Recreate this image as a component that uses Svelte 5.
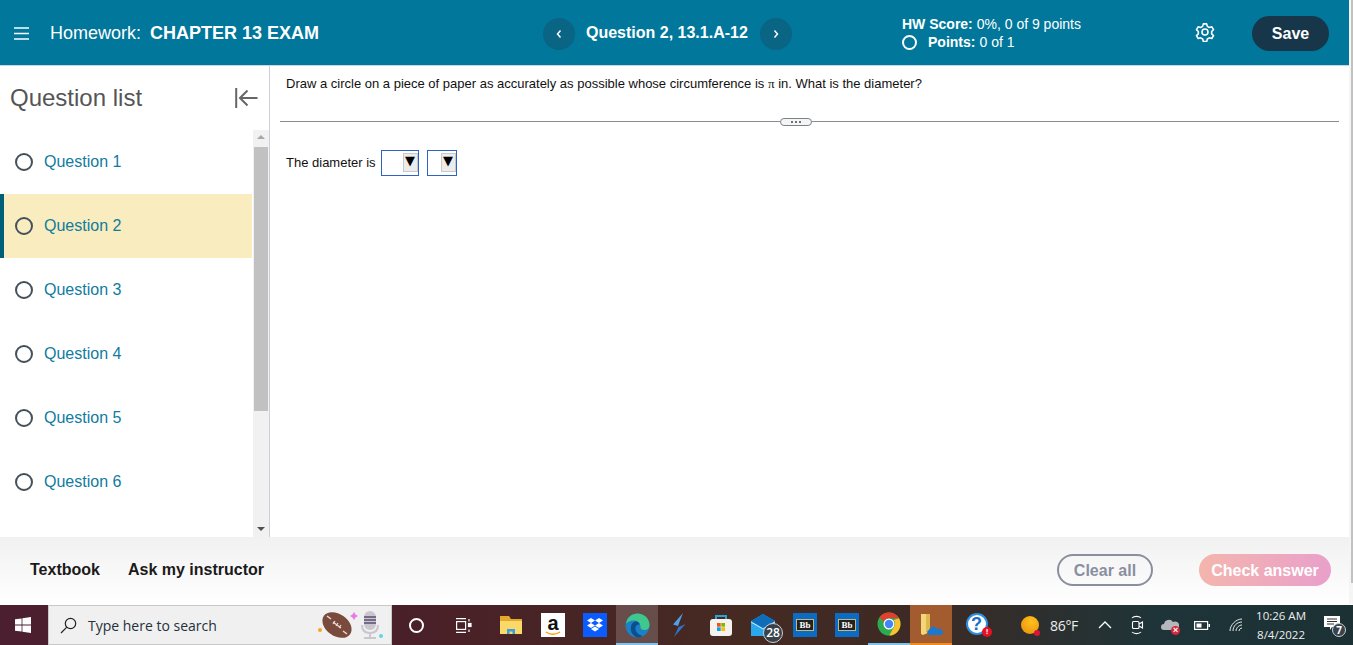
<script lang="ts">
	const questions = [1, 2, 3, 4, 5, 6];
	let current = $state(2);
</script>

<div class="page">
	<div class="shell">
		<div class="main">
			<header class="topbar">
				<svg class="burger" width="15" height="13" viewBox="0 0 15 13"><path d="M0 1h15M0 6.5h15M0 12h15" stroke="#fff" stroke-width="1.4" /></svg>
				<div class="title">Homework:<b>CHAPTER 13 EXAM</b></div>
				<div class="qnav">
					<button class="round" aria-label="Previous"><svg width="8" height="10" viewBox="0 0 8 10"><path d="M5.5 1.5 2.5 5l3 3.5" fill="none" stroke="#fff" stroke-width="1.5" /></svg></button>
					<span>Question 2, 13.1.A-12</span>
					<button class="round" aria-label="Next"><svg width="8" height="10" viewBox="0 0 8 10"><path d="M2.5 1.5 5.5 5l-3 3.5" fill="none" stroke="#fff" stroke-width="1.5" /></svg></button>
				</div>
				<div class="score">
					<div><b>HW Score:</b> 0%, 0 of 9 points</div>
					<div class="points"><i class="ring"></i><b>Points:</b> 0 of 1</div>
				</div>
				<svg class="gear" width="20" height="20" viewBox="0 0 24 24" fill="none" stroke="#fff" stroke-width="1.9" stroke-linejoin="round">
					<path d="M10 2.2h4l.8 3 2.4 1.4 3-.8 2 3.4-2.2 2.2v2.8l2.2 2.2-2 3.4-3-.8-2.4 1.4-.8 3h-4l-.8-3-2.4-1.4-3 .8-2-3.4 2.2-2.2v-2.8L1.8 9.2l2-3.4 3 .8 2.4-1.4z" />
					<circle cx="12" cy="12" r="3.6" />
				</svg>
				<button class="save">Save</button>
			</header>

			<div class="middle">
				<aside class="sidebar">
					<div class="side-head">
						<h2>Question list</h2>
						<svg width="23" height="20" viewBox="0 0 23 20" fill="none" stroke="#666" stroke-width="2"><path d="M1.200 0v20M22.500 10H5M12.500 2.500 5 10l7.500 7.500" /></svg>
					</div>
					<div class="side-body">
						<ul>
							{#each questions as q}
								<li class:active={q === current}>
									<i class="dot"></i>
									<span>Question {q}</span>
								</li>
							{/each}
						</ul>
						<div class="scroll">
							<svg class="arrow" width="8" height="4" viewBox="0 0 8 4"><path d="M4 0 8 4H0z" fill="#a8a8a8" /></svg>
							<div class="thumb"></div>
							<svg class="arrow down" width="8" height="4" viewBox="0 0 8 4"><path d="M0 0h8L4 4z" fill="#505050" /></svg>
						</div>
					</div>
				</aside>
				<section class="content">
					<p class="question">Draw a circle on a piece of paper as accurately as possible whose circumference is <span class="pi">π</span> in. What is the diameter?</p>
					<div class="divider">
						<hr class="left" />
						<span class="handle"><em></em><em></em><em></em></span>
						<hr />
					</div>
					<div class="answer">
						<span class="label">The diameter is</span>
						<span class="pick wide"><span class="btn">▼</span></span>
						<span class="pick"><span class="btn">▼</span></span>
					</div>
				</section>
			</div>

			<footer class="actions">
				<a href="#textbook">Textbook</a>
				<a href="#ask">Ask my instructor</a>
				<button class="clear">Clear all</button>
				<button class="check">Check answer</button>
			</footer>
		</div>
		<div class="pagebar"><div></div></div>
	</div>

	<div class="taskbar">
		<div class="start">
			<svg width="16" height="16" viewBox="0 0 16 16" fill="#fff"><path d="M0 2.300 6.600 1.400v6.200H0zM7.400 1.300 16 0v7.600H7.400zM0 8.400h6.600v6.200L0 13.700zM7.400 8.400H16V16l-8.600-1.300z" /></svg>
		</div>
		<div class="search">
			<svg width="17" height="17" viewBox="0 0 17 17" fill="none" stroke="#222" stroke-width="1.2"><circle cx="10.500" cy="6.500" r="5.200" /><path d="M6.800 10.200 1 16" /></svg>
			<span>Type here to search</span>
			<svg class="doodle" width="66" height="30" viewBox="0 0 66 30">
				<circle cx="2" cy="20" r="2" fill="#f5a623" />
				<ellipse cx="19" cy="15" rx="16" ry="11" transform="rotate(35 19 15)" fill="#7a4a3c" />
				<path d="M9 6l4 3M25 21l4 3" stroke="#e9dcd6" stroke-width="1.500" />
				<path d="M15 12l8 6M17 11l-2 3M20 13l-2 3M23 15l-2 3" stroke="#e9dcd6" stroke-width="1.200" />
				<path d="M36 2l1.500 2.500L40 6l-2.500 1.500L36 10l-1.500-2.500L32 6l2.500-1.500z" fill="#e77be6" />
				<rect x="46" y="1" width="12" height="19" rx="6" fill="#c9c6cf" />
				<path d="M46 7h12M46 10h12M46 13h12" stroke="#5a5070" stroke-width="1.300" />
				<path d="M44 15c0 6 3 8 8 8s8-2 8-8M52 23v4M46 28h12" fill="none" stroke="#c9c6cf" stroke-width="2" />
				<circle cx="63" cy="26" r="2" fill="#5fd6e6" />
			</svg>
		</div>
		<div class="tb ring-tb"><i></i></div>
		<div class="tb view">
			<svg width="16" height="15" viewBox="0 0 16 15" fill="none" stroke="#fff" stroke-width="1.200"><path d="M0 .6h10M0 14.400h10" /><rect x=".6" y="3.600" width="9" height="7.800" /><path d="M13 1v2.500M13 11.500V14" /><rect x="12.500" y="5.500" width="2.500" height="3" fill="#fff" /></svg>
		</div>
		<div class="tb">
			<svg width="24" height="20" viewBox="0 0 24 20"><path d="M1 1h9l2 3h11v15H1z" fill="#e3a92b" /><path d="M1 6h22v13H1z" fill="#fbd968" /><path d="M8 14h8v5h-2.500v-2.500h-3V19H8z" fill="#3b9ddd" /></svg>
		</div>
		<div class="tb"><span class="tile amazon">a<svg width="16" height="5" viewBox="0 0 16 5"><path d="M1 1c4 3 9 3 14 0" fill="none" stroke="#f90" stroke-width="1.400" /></svg></span></div>
		<div class="tb">
			<span class="tile drop"><svg width="16" height="14" viewBox="0 0 16 14" fill="#fff"><path d="M4 0 8 2.500 4 5 0 2.500zM12 0l4 2.500L12 5 8 2.500zM4 5l4 2.500L4 10 0 7.500zM12 5l4 2.500L12 10 8 7.500zM4 11l4-2.500 4 2.500-4 2.500z" /></svg></span>
		</div>
		<div class="tb on edge">
			<svg width="25" height="25" viewBox="0 0 25 25"><circle cx="12.500" cy="12.500" r="12" fill="#1d7fc4" /><path d="M1 11C2 4 7 .5 12.500.5 19 .5 24.500 5.500 24.500 12c0 3-2 5-5 5-2.500 0-4-1-4-2.500 0-5-3-7-6.500-7C5.500 7.500 2.500 9 1 11z" fill="#3fc78d" /><path d="M6 14c0-3 2.500-5.500 5-5.500 2 0 3.500 1.500 3.500 3-3 0-4.500 2-4 5 .500 3 3.500 5.500 7 6.500-2 1.200-3.500 1.500-5 1.500C7.500 23 5 18 6 14z" fill="#0b4f8f" /></svg>
		</div>
		<div class="tb">
			<svg width="14" height="24" viewBox="0 0 14 24"><path d="M11 0 1 11.500l5 1.500 1.500-4z" fill="#4fa0ea" /><path d="M13.500 11 2 24l4.500-10 2-.8z" fill="#2f74d0" /></svg>
		</div>
		<div class="tb">
			<svg width="24" height="24" viewBox="0 0 24 24"><path d="M7 7V3h10v4" fill="none" stroke="#29a3d8" stroke-width="2" /><rect x="1" y="6" width="22" height="17" rx="3" fill="#f4f1ee" /><rect x="8" y="10" width="3.700" height="3.700" fill="#f25022" /><rect x="12.300" y="10" width="3.700" height="3.700" fill="#7fba00" /><rect x="8" y="14.300" width="3.700" height="3.700" fill="#00a4ef" /><rect x="12.300" y="14.300" width="3.700" height="3.700" fill="#ffb900" /></svg>
		</div>
		<div class="tb mail">
			<svg width="24" height="22" viewBox="0 0 24 22"><path d="M0 7 12 0l12 7v15H0z" fill="#2aa8ee" /><path d="M0 7l12 7 12-7-12-7z" fill="#0e6cb8" /><path d="M0 8l12 7 12-7" fill="none" stroke="#cfeafa" stroke-width="1" /></svg>
			<b class="count">28</b>
		</div>
		<div class="tb"><span class="tile bb"><span>Bb</span></span></div>
		<div class="tb"><span class="tile bb"><span>Bb</span></span></div>
		<div class="tb chrome">
			<svg width="24" height="24" viewBox="0 0 24 24"><circle cx="12" cy="12" r="11.500" fill="#2da94f" /><path d="M12 .5a11.500 11.500 0 0 1 10 5.800H12a5.700 5.700 0 0 0-5.300 3.500L2.500 5.200A11.500 11.500 0 0 1 12 .5z" fill="#e2402f" /><path d="M22 6.300a11.500 11.500 0 0 1-9.800 17.200l4.700-8.500A5.700 5.700 0 0 0 16.500 8z" fill="#fbc02d" /><circle cx="12" cy="12" r="5.500" fill="#fff" /><circle cx="12" cy="12" r="4.200" fill="#4285f4" /></svg>
		</div>
		<div class="tb hot">
			<svg width="24" height="24" viewBox="0 0 24 24"><path d="M2 2h9v18l-7 3-2-1z" fill="#f3d677" /><path d="M7 2h4v18H7z" fill="#dcb84e" /><path d="M11 23c-3 0-4-4-1-5 1-4 7-4 8-1 3-1 6 1 6 3 0 2-1 3-3 3z" fill="#1b78d0" /></svg>
		</div>
		<div class="tray">
			<div class="help">
				<svg width="24" height="24" viewBox="0 0 24 24"><circle cx="11" cy="11" r="10" fill="#fff" stroke="#2e8fe0" stroke-width="2" /></svg>
				<span>?</span>
				<b>!</b>
			</div>
			<div class="weather"><i class="sun"></i><i class="sun-dot"></i><span>86°F</span></div>
			<svg class="t-up" width="14" height="8" viewBox="0 0 14 8" fill="none" stroke="#fff" stroke-width="1.300"><path d="M1 7l6-6 6 6" /></svg>
			<svg class="t-meet" width="13" height="20" viewBox="0 0 13 20" fill="none" stroke="#fff" stroke-width="1.100"><path d="M1 3C3 .8 8 .8 10 3M1 17c2 2.200 7 2.200 9 0" /><rect x="1.500" y="6.500" width="6.500" height="7" rx="1" /><path d="M8 9l3.500-2v6L8 11" /></svg>
			<div class="t-cloud">
				<svg width="18" height="12" viewBox="0 0 18 12"><path d="M3 12a3 3 0 0 1 0-6 5 5 0 0 1 9-2 4 4 0 0 1 4 8z" fill="#b5b8ba" /></svg>
				<b>×</b>
			</div>
			<svg class="t-batt" width="16" height="9" viewBox="0 0 16 9"><rect x=".6" y=".6" width="13" height="7.800" fill="none" stroke="#fff" stroke-width="1.200" /><rect x="2.500" y="2.500" width="5" height="4" fill="#fff" /><rect x="14.500" y="3" width="1.500" height="3" fill="#fff" /></svg>
			<svg class="t-wifi" width="14" height="14" viewBox="0 0 14 14" fill="none" stroke="#e8ecec" stroke-width="1"><path d="M1 13C1 7 7 1 13 1M4 13c0-5 4-9 9-9M7 13c0-3 3-6 6-6M10 13c0-1.500 1.500-3 3-3" /></svg>
			<div class="clock"><div>10:26 AM</div><div>8/4/2022</div></div>
			<div class="notes">
				<svg width="16" height="14" viewBox="0 0 16 14"><path d="M0 0h16v11H8l-2 3v-3H0z" fill="#fff" /><path d="M3 3h10M3 5.500h10M3 8h7" stroke="#333" stroke-width="1" /></svg>
				<b>7</b>
			</div>
		</div>
	</div>
</div>

<style>
	:global(body) {
		margin: 0;
		background: #fff;
		overflow: hidden;
	}

	.page {
		height: 645px;
		width: 1353px;
		display: flex;
		flex-direction: column;
		font-family: 'Liberation Sans', Arial, sans-serif;
		color: #111;
	}

	.shell {
		flex: 1;
		display: flex;
		min-height: 0;
		margin-bottom: 1px;
	}

	.main {
		flex: 1;
		display: flex;
		flex-direction: column;
		min-width: 0;
	}

	.pagebar {
		width: 4px;
		flex: none;
		background: #f5f5f5;
		display: flex;
		justify-content: flex-end;
	}

	.pagebar div {
		width: 2px;
		height: 583px;
		background: #c1c1c1;
	}

	.topbar {
		height: 63px;
		padding-top: 2px;
		flex: none;
		background: #00779b;
		border-bottom: 1px solid #c9d6e4;
		color: #fff;
		display: flex;
		align-items: center;
		padding-left: 14px;
		box-sizing: content-box;
	}

	.title {
		font-size: 18px;
		margin-left: 21px;
		width: 493px;
	}

	.title b {
		margin-left: 9px;
	}

	.qnav {
		display: flex;
		align-items: center;
		gap: 11px;
		font-size: 16px;
		font-weight: 700;
		width: 359px;
	}

	.qnav span {
		margin: -2px 1px 0 0;
	}

	.round {
		width: 32px;
		height: 32px;
		border: none;
		border-radius: 50%;
		background: #0a6483;
		padding: 0;
		display: flex;
		align-items: center;
		justify-content: center;
	}

	.score {
		font-size: 14px;
		line-height: 18px;
		width: 293px;
		margin-top: -1px;
	}

	.points {
		display: flex;
		align-items: center;
	}

	.points b {
		margin-right: 4px;
	}

	.ring {
		width: 11px;
		height: 11px;
		border: 2px solid #fff;
		border-radius: 50%;
		margin-right: 11px;
	}

	.gear {
		margin: -3px 37px 0 0;
	}

	.save {
		width: 77px;
		height: 35px;
		border: none;
		border-radius: 18px;
		background: #17364a;
		color: #fff;
		font: 700 16px 'Liberation Sans', Arial, sans-serif;
		padding: 0;
	}

	.middle {
		flex: 1;
		min-height: 0;
		display: flex;
	}

	.sidebar {
		width: 269px;
		flex: none;
		border-right: 1px solid #c9d0da;
		display: flex;
		flex-direction: column;
	}

	.side-head {
		height: 64px;
		flex: none;
		display: flex;
		align-items: center;
		justify-content: space-between;
		padding: 0 11px 0 10px;
	}

	.side-head h2 {
		margin: 0;
		font-size: 24px;
		font-weight: 400;
		color: #555;
	}

	.side-body {
		flex: 1;
		min-height: 0;
		display: flex;
	}

	ul {
		list-style: none;
		margin: 0;
		padding: 0;
		width: 252px;
	}

	li {
		height: 64px;
		display: flex;
		align-items: center;
		padding-left: 15px;
		box-sizing: border-box;
		font-size: 16px;
		color: #0f7c9e;
	}

	li.active {
		background: #f9ecbf;
		border-left: 4px solid #00607a;
		padding-left: 11px;
	}

	.dot {
		width: 14px;
		height: 14px;
		border: 2px solid #44505c;
		border-radius: 50%;
		margin-right: 11px;
	}

	.scroll {
		width: 16px;
		margin-left: 1px;
		background: #f1f1f1;
		display: flex;
		flex-direction: column;
		align-items: center;
		padding-top: 5px;
		box-sizing: border-box;
	}

	.arrow {
		flex: none;
	}

	.arrow.down {
		margin-top: auto;
		margin-bottom: 6px;
	}

	.thumb {
		width: 14px;
		height: 264px;
		margin-top: 8px;
		background: #c1c1c1;
	}

	.content {
		flex: 1;
		min-width: 0;
		padding: 0 10px;
		font-size: 13px;
	}

	.question {
		margin: 0;
		padding: 11px 0 0 6px;
		line-height: 14px;
		height: 40px;
		box-sizing: content-box;
	}

	.pi {
		font-family: 'Liberation Serif', serif;
	}

	.divider {
		display: flex;
		align-items: center;
		height: 9px;
	}

	.divider hr {
		flex: 1;
		margin: 0;
		border: none;
		border-top: 1px solid #8a8d92;
	}

	.divider hr.left {
		flex: none;
		width: 500px;
	}

	.handle {
		width: 32px;
		height: 8px;
		box-sizing: border-box;
		border: 1px solid #7d828a;
		border-radius: 4px;
		display: flex;
		align-items: center;
		justify-content: center;
		gap: 2px;
		background: #f5f5f5;
	}

	.handle em {
		width: 2px;
		height: 2px;
		background: #3c4650;
		border-radius: 50%;
	}

	.answer {
		display: flex;
		align-items: center;
		margin-top: 24px;
		padding-left: 6px;
		height: 26px;
	}

	.label {
		margin-top: -2px;
	}

	.pick {
		width: 30px;
		height: 26px;
		box-sizing: border-box;
		border: 1px solid #2f62c6;
		margin-left: 8px;
		display: flex;
		justify-content: flex-end;
		padding: 2px 0 3px;
	}

	.pick.wide {
		width: 38px;
		margin-left: 5px;
	}

	.btn {
		width: 15px;
		background: #ececec;
		border: 1px solid #c8c8c8;
		box-sizing: border-box;
		font-size: 13px;
		line-height: 14px;
		text-align: center;
		color: #000;
		font-family: 'DejaVu Sans', sans-serif;
	}

	.actions {
		height: 67px;
		flex: none;
		background: linear-gradient(#f1f1f1, #fff);
		display: flex;
		align-items: center;
		padding: 0 18px 0 30px;
		font-size: 16px;
		font-weight: 700;
		gap: 28px;
	}

	.actions a {
		color: #1a1a1a;
		text-decoration: none;
		margin-top: -2px;
	}

	.actions button {
		height: 32px;
		margin-top: -1px;
		border-radius: 16px;
		font: 700 16px 'Liberation Sans', Arial, sans-serif;
		padding: 1px 0 0;
	}

	.clear {
		width: 96px;
		margin-left: auto;
		background: transparent;
		border: 2px solid #8a8fa0;
		color: #8a8fa0;
	}

	.check {
		width: 132px;
		margin-left: 18px;
		border: none;
		color: #fff;
		background: linear-gradient(100deg, #f4b6ad, #e99fcb);
	}

	.taskbar {
		height: 40px;
		flex: none;
		display: flex;
		align-items: center;
		background: linear-gradient(90deg, #4c1f30 0, #4a2028 30%, #452a22 55%, #3d2a24 68%, #1f3438 85%, #1c3134 100%);
		color: #fff;
		font-family: 'Open Sans', sans-serif;
	}

	.start {
		width: 48px;
		height: 40px;
		display: flex;
		align-items: center;
		justify-content: center;
		flex: none;
		padding-right: 2px;
		box-sizing: border-box;
	}

	.search {
		width: 344px;
		height: 40px;
		box-sizing: border-box;
		flex: none;
		background: #f0f0f0;
		border: 1px solid #c8c8c8;
		color: #24303c;
		font-size: 14px;
		display: flex;
		align-items: center;
		padding-left: 11px;
	}

	.search span {
		margin-left: 11px;
	}

	.doodle {
		margin-left: auto;
		margin-right: 7px;
	}

	.tb {
		width: 42px;
		height: 40px;
		flex: none;
		display: flex;
		align-items: center;
		justify-content: center;
		position: relative;
		box-sizing: border-box;
	}

	.ring-tb {
		width: 48px;
	}

	.ring-tb i {
		width: 11px;
		height: 11px;
		border: 2.500px solid #fff;
		border-radius: 50%;
	}

	.view {
		width: 47px;
		margin-right: 3px;
	}

	.tile {
		width: 24px;
		height: 24px;
		display: flex;
		align-items: center;
		justify-content: center;
	}

	.amazon {
		background: #fff;
		color: #111;
		font: 700 20px/18px 'Liberation Sans', sans-serif;
		flex-direction: column;
	}

	.amazon svg {
		margin-top: -1px;
	}

	.drop {
		background: #0b5cff;
	}

	.on {
		background: rgba(255, 255, 255, 0.18);
		border-bottom: 2px solid #7cc4ee;
	}

	.edge svg {
		margin-top: 2px;
	}

	.chrome {
		border-bottom: 2px solid #7cc4ee;
	}

	.count {
		position: absolute;
		left: 21px;
		top: 18px;
		width: 20px;
		height: 20px;
		border-radius: 50%;
		background: #39424a;
		border: 1px solid #c8d0d6;
		box-sizing: border-box;
		font-size: 12px;
		font-weight: 600;
		line-height: 18px;
		text-align: center;
	}

	.bb {
		background: #0a6cc4;
	}

	.bb span {
		background: #222;
		border: 1px solid #c9b77a;
		font: 700 9px/10px 'Liberation Serif', serif;
		padding: 0 2px;
		color: #fff;
	}

	.hot {
		background: #a25c2f;
		border-bottom: 2px solid #f58a1f;
	}

	.tray {
		flex: 1;
		display: flex;
		align-items: center;
		height: 40px;
		min-width: 0;
	}

	.help {
		position: relative;
		width: 24px;
		height: 24px;
		margin-left: 14px;
	}

	.help svg {
		display: block;
	}

	.help span {
		position: absolute;
		left: 5px;
		top: 0;
		color: #1c6fc6;
		font: 700 18px/22px 'Liberation Sans', sans-serif;
	}

	.help b {
		position: absolute;
		right: -2px;
		bottom: 0;
		width: 10px;
		height: 10px;
		border-radius: 50%;
		background: #e81123;
		font: 700 8px/10px 'Liberation Sans', sans-serif;
		text-align: center;
	}

	.weather {
		position: relative;
		margin-left: 31px;
		display: flex;
		align-items: center;
		font-size: 14px;
		color: #eee;
		letter-spacing: -0.3px;
	}

	.sun {
		width: 18px;
		height: 18px;
		border-radius: 50%;
		background: radial-gradient(circle at 60% 30%, #ffc21c, #e88a10);
		margin-right: 11px;
	}

	.sun-dot {
		position: absolute;
		left: 13px;
		top: 14px;
		width: 6px;
		height: 6px;
		border-radius: 50%;
		background: #d8143a;
	}

	.t-up {
		margin-left: 20px;
	}

	.t-meet {
		margin-left: 19px;
	}

	.t-cloud {
		position: relative;
		margin-left: 17px;
		width: 18px;
		height: 14px;
	}

	.t-cloud svg {
		display: block;
	}

	.t-cloud b {
		position: absolute;
		right: -1px;
		bottom: -3px;
		width: 9px;
		height: 9px;
		border-radius: 50%;
		background: #d6263a;
		font: 700 9px/9px 'Liberation Sans', sans-serif;
		text-align: center;
	}

	.t-batt {
		margin-left: 15px;
	}

	.t-wifi {
		margin-left: 19px;
	}

	.clock {
		margin-left: 8px;
		width: 60px;
		font-size: 11.500px;
		line-height: 19px;
		text-align: center;
		color: #eee;
	}

	.notes {
		position: relative;
		margin-left: 13px;
		width: 18px;
		height: 22px;
	}

	.notes svg {
		display: block;
		margin-top: 2px;
	}

	.notes b {
		position: absolute;
		left: 8px;
		top: 9px;
		width: 12px;
		height: 12px;
		border-radius: 50%;
		background: #39424a;
		border: 1px solid #c8d0d6;
		font-size: 10px;
		line-height: 12px;
		text-align: center;
	}
</style>
